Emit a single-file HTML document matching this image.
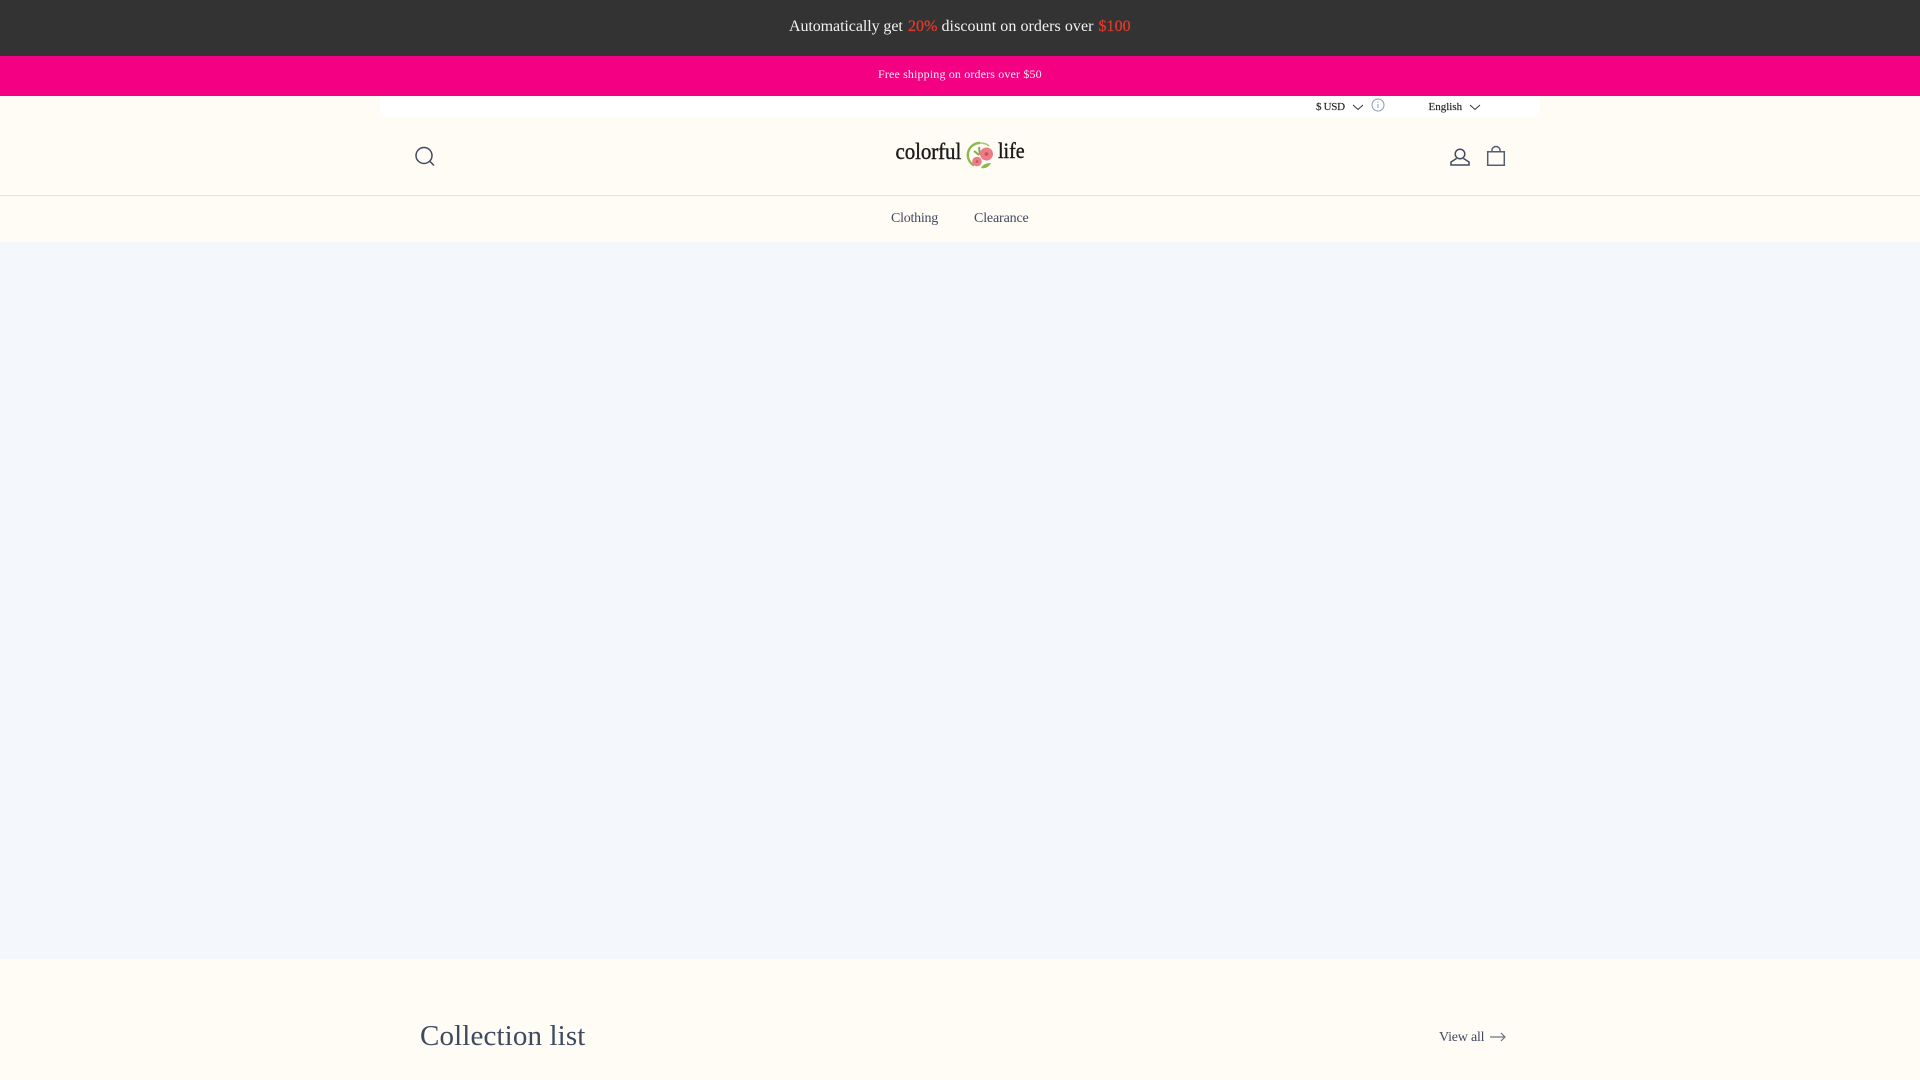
<!DOCTYPE html>
<html lang="en"><head><meta charset="utf-8"><title>Colorful Life</title>
<style>
html,body{margin:0;padding:0;width:1920px;height:1080px;overflow:hidden;background:#fffbf5}
body{position:relative;font-family:"Liberation Serif",serif;color:#414b61}
.a{position:absolute}
.t{position:absolute;white-space:nowrap;line-height:1}
svg{position:absolute;left:0;top:0}
.w{top:19px;font-size:16px;letter-spacing:.06px;color:#f2f2f2}
.r{color:#e0392b;-webkit-text-stroke:.3px #e0392b}
</style></head><body>
<div class="a" style="left:0;top:0;width:1920px;height:56px;background:#333"></div>
<div class="a" style="left:0;top:56px;width:1920px;height:40px;background:#f40082"></div>
<div class="a" style="left:380px;top:96px;width:1160px;height:21px;background:#fff"></div>
<div class="a" style="left:0;top:195px;width:1920px;height:1px;background:#e4e2de"></div>
<div class="a" style="left:0;top:242px;width:1920px;height:717px;background:#f4f7fb"></div>

<div class="t w" style="left:789px;letter-spacing:-.08px">Automatically get</div>
<div class="t w r" style="left:908px">20%</div>
<div class="t w" style="left:941.500px">discount on orders over</div>
<div class="t w r" style="left:1098.500px">$100</div>
<div class="t" style="left:878px;top:68px;font-size:12px;letter-spacing:.15px;color:#fdeaf4">Free shipping on orders over $50</div>
<div class="t" style="left:1316px;top:102px;font-size:11px;letter-spacing:-.3px;color:#222;-webkit-text-stroke:.15px #222">$ USD</div>
<div class="t" style="left:1428.5px;top:102px;font-size:11px;color:#222;-webkit-text-stroke:.15px #222">English</div>

<div class="t" style="left:895.500px;top:141.500px;font-size:21px;letter-spacing:-.1px;color:#1a1a1a;-webkit-text-stroke:.35px #1a1a1a;transform:scaleY(1.12);transform-origin:0 18px">colorful</div>
<div class="t" style="left:998px;top:141.500px;font-size:20px;color:#1a1a1a;-webkit-text-stroke:.35px #1a1a1a;transform:scaleY(1.12);transform-origin:0 18px">life</div>

<div class="t" style="left:891px;top:212px;font-size:14px;letter-spacing:-.25px">Clothing</div>
<div class="t" style="left:974px;top:212px;font-size:14px;letter-spacing:-.15px">Clearance</div>
<div class="t" style="left:420px;top:1022px;font-size:29px;letter-spacing:.13px;color:#3d4a60">Collection list</div>
<div class="t" style="left:1439px;top:1031px;font-size:14px;letter-spacing:-.2px">View all</div>

<svg width="1920" height="1080" viewBox="0 0 1920 1080" fill="none">
  <path d="M1353 105l5 4.500 5-4.500M1470 105l5 4.500 5-4.500" stroke="#333" stroke-width="1"/>
  <circle cx="1378" cy="105" r="6" stroke="#8d9ab5" stroke-width="1"/>
  <path d="M1378 104v4M1378 101.500v1.200" stroke="#8d9ab5" stroke-width="1"/>
  <circle cx="424" cy="155.500" r="8" stroke="#414b61" stroke-width="1.500"/>
  <path d="M430 161.500l4 4" stroke="#414b61" stroke-width="1.500"/>
  <circle cx="1460" cy="154" r="4.800" stroke="#414b61" stroke-width="1.500"/>
  <path d="M1456.500 158.500l-5.500 3.500v3h18v-3l-5.500-3.500" stroke="#414b61" stroke-width="1.500"/>
  <path d="M1487.700 151.700h16.600v13.600h-16.600zM1492 151.500v-1.500a4 3.500 0 0 1 8 0v1.500" stroke="#565f72" stroke-width="1.500"/>
  <path d="M1490 1037h15M1501 1033l4 4-4 4" stroke="#6d7484" stroke-width="1.200"/>
  <path d="M980 143a12 12 0 0 0-6 22.500" stroke="#8db94a" stroke-width="2.400"/>
  <path d="M980 143c4 0 7 1 9 3" stroke="#a5c96a" stroke-width="1.600"/>
  <path d="M981 168c4 1 8-1 10-5-4 0-8 1-10 5z" fill="#8db94a"/>
  <path d="M979 147l1 8M974 151l5 4" stroke="#7fae4a" stroke-width="2"/>
  <circle cx="986.500" cy="154" r="6.500" fill="#ee7b86"/>
  <circle cx="977" cy="161.500" r="4.800" fill="#ee7b86"/>
  <circle cx="986.500" cy="154" r="1.800" fill="#c9505f"/>
  <circle cx="977" cy="161.500" r="1.300" fill="#c9505f"/>
</svg>
</body></html>
